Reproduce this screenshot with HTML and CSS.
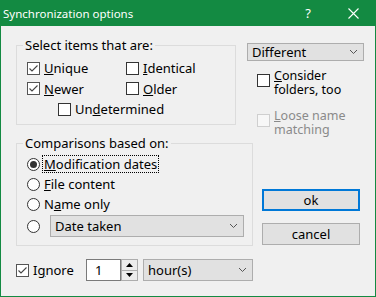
FILE: index.html
```html
<!DOCTYPE html>
<html>
<head>
<meta charset="utf-8">
<link rel="stylesheet" href="styles.css">
</head>
<body>
<div class="window">
  <div class="titlebar">
    <span class="title">Synchronization options</span>
    <span class="help">?</span>
    <svg class="close" width="11" height="11" viewBox="0 0 11 11"><path d="M0.5 0.5L10.5 10.5M10.5 0.5L0.5 10.5" stroke="#fff" stroke-width="1.1" fill="none"/></svg>
  </div>
  <div class="content">
    <fieldset class="group g1">
      <legend>Select items that are:</legend>
      <div class="grid3">
        <label class="opt"><span class="cb checked"><svg width="11" height="11" viewBox="0 0 11 11"><path d="M1.5 5.5L4 8L9.5 2.5" stroke="#444" stroke-width="1.1" fill="none"/></svg></span><span><u>U</u>nique</span></label>
        <label class="opt"><span class="cb"></span><span><u>I</u>dentical</span></label>
        <label class="opt"><span class="cb checked"><svg width="11" height="11" viewBox="0 0 11 11"><path d="M1.5 5.5L4 8L9.5 2.5" stroke="#444" stroke-width="1.1" fill="none"/></svg></span><span><u>N</u>ewer</span></label>
        <label class="opt"><span class="cb"></span><span><u>O</u>lder</span></label>
        <label class="opt undet"><span class="cb"></span><span>Un<u>d</u>etermined</span></label>
      </div>
    </fieldset>
    <div class="side">
      <div class="select sel-diff"><span>Different</span><svg width="7" height="4" viewBox="0 0 7 4"><path d="M0 0L3.5 3.5L7 0" stroke="#555" fill="none"/></svg></div>
      <label class="opt2"><span class="cb"></span><span class="lbl2"><u>C</u>onsider<br>folders, too</span></label>
      <label class="opt2 disabled"><span class="cb"></span><span class="lbl2"><u>L</u>oose name<br>matching</span></label>
    </div>
    <fieldset class="group g2">
      <legend>Comparisons based on:</legend>
      <label class="radio"><span class="rb on"></span><span class="focus"><u>M</u>odification dates</span></label>
      <label class="radio"><span class="rb"></span><span><u>F</u>ile content</span></label>
      <label class="radio"><span class="rb"></span><span>N<u>a</u>me only</span></label>
      <div class="radio last"><span class="rb"></span><div class="select sel-date"><span>Date taken</span><svg width="7" height="4" viewBox="0 0 7 4"><path d="M0 0L3.5 3.5L7 0" stroke="#555" fill="none"/></svg></div></div>
    </fieldset>
    <div class="buttons">
      <button class="btn default">ok</button>
      <button class="btn">cancel</button>
    </div>
    <div class="bottom">
      <label class="opt"><span class="cb checked"><svg width="11" height="11" viewBox="0 0 11 11"><path d="M1.5 5.5L4 8L9.5 2.5" stroke="#444" stroke-width="1.1" fill="none"/></svg></span><span>I<u>g</u>nore</span></label>
      <div class="num">1</div>
      <div class="spin">
        <div class="up"><svg width="7" height="4" viewBox="0 0 7 4"><path d="M0 4L3.5 0L7 4Z" fill="#000"/></svg></div>
        <div class="down"><svg width="7" height="4" viewBox="0 0 7 4"><path d="M0 0L3.5 4L7 0Z" fill="#000"/></svg></div>
      </div>
      <div class="select sel-hour"><span>hour(s)</span><svg width="7" height="4" viewBox="0 0 7 4"><path d="M0 0L3.5 3.5L7 0" stroke="#555" fill="none"/></svg></div>
    </div>
  </div>
</div>
</body>
</html>
```
FILE: styles.css
```css
* { box-sizing: border-box; }
html, body { margin: 0; padding: 0; }
body {
  font-family: "Noto Sans", "DejaVu Sans", sans-serif;
  font-size: 13px;
  color: #000;
  background: #f0f0f0;
}
.window {
  width: 376px;
  height: 297px;
  border: 1px solid #138a42;
  border-top: none;
  background: #f0f0f0;
}
.titlebar {
  height: 26px;
  background: #138a42;
  color: #fff;
  display: flex;
  align-items: center;
  padding-left: 3px;
  margin: 0 -1px;
  padding-right: 17px;
}
.title { font-size: 11.5px; flex: 1; }
.help { font-size: 13px; margin-right: 37px; }
.close { display: block; }
.content {
  display: grid;
  grid-template-columns: 231px 113px;
  grid-template-rows: 88px 111px;
  row-gap: 10px;
  padding: 11px 0 0 15px;
}
.group {
  margin: 0;
  border: 1px solid #dcdcdc;
  min-width: 0;
}
.group legend {
  padding: 0 2px;
  margin-left: -4px;
  line-height: 16px;
  height: 16px;
}
.g1 { width: 220px; height: 88px; padding: 5px 0 0 10px; }
.g2 { width: 237px; height: 111px; padding: 3px 0 0 10px; }
.grid3 {
  display: grid;
  grid-template-columns: 99px auto;
  grid-auto-rows: 20.5px;
}
.opt { display: flex; align-items: center; gap: 4px; line-height: 16px; }
.undet { grid-column: 1 / 3; padding-left: 31px; }
.cb {
  width: 13px; height: 13px;
  border: 1px solid #333;
  background: #fff;
  display: flex; align-items: center; justify-content: center;
  flex: none;
}
.cb.checked { border-color: #555; }
.cb svg { display: block; }
.side { padding-top: 6px; }
.select {
  display: flex; align-items: center; justify-content: space-between;
  background: #e1e1e1;
  border: 1px solid #adadad;
  padding: 0 6px 0 4px;
}
.sel-diff { width: 117px; height: 18px; }
.opt2 { display: flex; gap: 4px; margin-left: 10px; }
.opt2 .cb { margin-top: 5px; }
.lbl2 { line-height: 13.5px; font-size: 12.5px; }
.opt2:first-of-type { margin-top: 8px; }
.opt2 + .opt2 { margin-top: 13px; }
.disabled { color: #8a8a8a; }
.disabled .cb { border-color: #cfcfcf; background: #f7f7f7; }
.radio { display: flex; align-items: center; gap: 4px; height: 20px; line-height: 16px; }
.radio.last { height: 22px; margin-top: 1px; gap: 10px; }
.rb {
  width: 13px; height: 13px; border-radius: 50%;
  border: 1px solid #333; background: #fff; flex: none;
  display: flex; align-items: center; justify-content: center;
}
.rb.on::after {
  content: ""; width: 7px; height: 7px; border-radius: 50%; background: #333;
}
.focus { outline: 1px dotted #000; outline-offset: 0; margin-left: -1px; padding: 0 1px; }
.sel-date { width: 194px; height: 22px; }
.buttons {
  padding: 54px 0 0 15px;
  display: flex; flex-direction: column; gap: 12px;
}
.btn {
  width: 98px; height: 22px;
  background: #e1e1e1;
  border: 1px solid #adadad;
  font: inherit; color: #000;
  padding: 0;
  line-height: 16px;
}
.btn.default { border: 2px solid #0078d7; }
.bottom {
  grid-column: 1 / 3;
  display: flex; align-items: center;
  margin-top: 3px;
  height: 22px;
}
.bottom .opt { width: 70px; }
.num {
  width: 35px; height: 22px;
  background: #fff; border: 1px solid #7a7a7a;
  padding-left: 8px; line-height: 20px;
}
.spin { width: 17px; height: 22px; display: flex; flex-direction: column; }
.spin div {
  flex: 1; border: 1px solid #adadad; background: #ececec;
  display: flex; align-items: center; justify-content: center;
}
.spin .down { border-top: none; }
.sel-hour { width: 110px; height: 22px; margin-left: 5px; }
```
